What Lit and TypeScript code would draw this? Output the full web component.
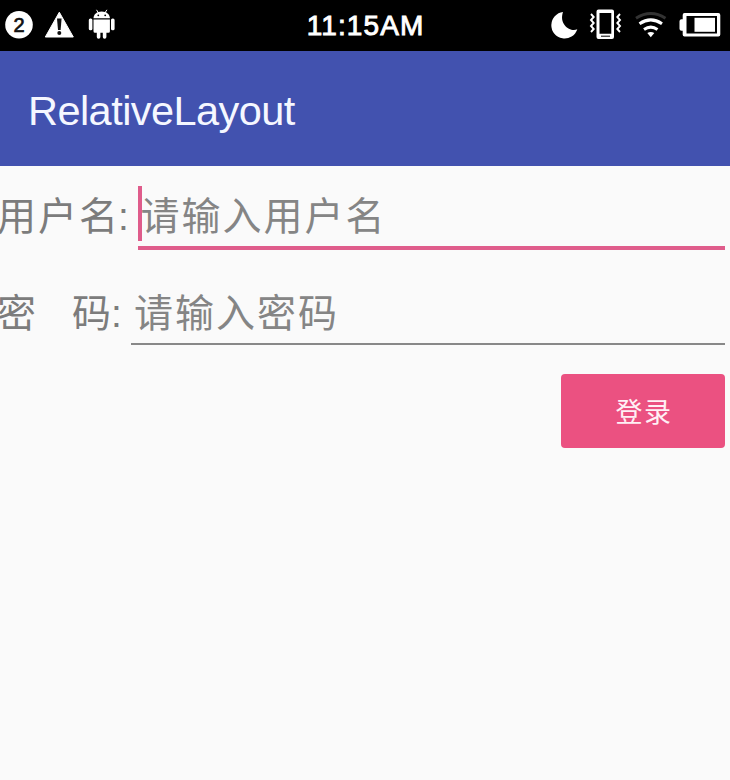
import { LitElement, html, css } from "lit";
import { customElement } from "lit/decorators.js";

@customElement("status-bar")
class StatusBar extends LitElement {
  static styles = css`
    :host {
      display: grid;
      grid-template-columns: 1fr auto 1fr;
      align-items: center;
      height: 51px;
      background: #000;
      color: #fff;
      font-family: "Liberation Sans", sans-serif;
    }
    svg { display: block; }
    .system { justify-self: end; }
    .clock {
      font-size: 28px;
      line-height: 52px;
      height: 51px;
      letter-spacing: 1.1px;
      padding-left: 1px;
      -webkit-text-stroke: 0.9px #fff;
    }
  `;
  render() {
    return html`
      <svg width="130" height="51" viewBox="0 0 130 51">
        <circle cx="19" cy="24.7" r="13.8" fill="#fff" />
        <text x="19" y="32" text-anchor="middle" font-size="20" fill="#111" stroke="#111" stroke-width=".7">2</text>
        <path d="M59.3 12.2 73.3 37H45.3Z" fill="#fff" stroke="#fff" stroke-width="1" stroke-linejoin="round" />
        <path d="M57 18.500h4.600l-1 11.500h-2.600z" fill="#111" />
        <circle cx="59.3" cy="33" r="2" fill="#111" />
        <g fill="#fff">
          <path d="M93.5 18.2c.2-3.8 3.3-6.6 8.2-6.6s8 2.8 8.2 6.6z" />
          <path d="M96.5 9.8l2.2 3.5M106.9 9.8l-2.2 3.5" stroke="#fff" stroke-width="1" />
          <path d="M93.5 19.6h16.4v11.6a1.5 1.5 0 0 1-1.5 1.5h-2v4.3a1.8 1.8 0 0 1-3.6 0v-4.3h-2.4v4.3a1.8 1.8 0 0 1-3.6 0v-4.3h-1.8a1.5 1.5 0 0 1-1.5-1.5z" />
          <rect x="88.8" y="18.5" width="3.6" height="11.8" rx="1.6" />
          <rect x="111" y="18.5" width="3.6" height="11.8" rx="1.6" />
        </g>
        <circle cx="98.3" cy="15.3" r=".9" /><circle cx="105.2" cy="15.3" r=".9" />
      </svg>
      <div class="clock">11:15AM</div>
      <svg class="system" width="190" height="51" viewBox="540 0 190 51">
        <path d="M563 12A13.300 13.300 0 1 0 577.300 29.200C571 32.500 558.500 25 563 12Z" fill="#fff" />
        <path fill-rule="evenodd" fill="#fff" d="M598.5 9.500h13.500a2 2 0 0 1 2 2v25.500a2 2 0 0 1-2 2h-13.500a2 2 0 0 1-2-2v-25.500a2 2 0 0 1 2-2zM599.500 13v20.800h11.800v-20.800z" />
        <path d="M601 36.200h9" stroke="#000" stroke-width="1" />
        <path d="M591 14l2.700 3-2.700 3 2.700 3-2.700 3 2.700 3-2.700 3M620 14l-2.700 3 2.700 3-2.700 3 2.700 3-2.700 3 2.700 3" fill="none" stroke="#fff" stroke-width="1.9" />
        <g fill="none" stroke-width="3">
          <path d="M636 18.200Q650.800 8.800 665.500 18.200" stroke="#333" />
          <path d="M639.500 23.800Q650.800 16 662 23.800" stroke="#fff" />
          <path d="M644 29.500Q650.800 24.800 657.500 29.500" stroke="#fff" />
        </g>
        <path d="M647.300 33q3.500-1.800 7 0l-3.500 4.300z" fill="#fff" />
        <path fill-rule="evenodd" fill="#fff" d="M684.500 13h33.800a2 2 0 0 1 2 2v19.500a2 2 0 0 1-2 2h-33.800a1.800 1.800 0 0 1-1.800-1.800v-4h-1.200a2 2 0 0 1-2-2v-7.500a2 2 0 0 1 2-2h1.200v-4.200a2 2 0 0 1 1.800-2zM686.500 16v17.500h30.500v-17.500z" />
        <rect x="694.500" y="17.800" width="20.500" height="14" fill="#fff" />
      </svg>
    `;
  }
}

@customElement("app-root")
class AppRoot extends LitElement {
  static styles = css`
    :host {
      display: block;
      height: 780px;
      overflow: hidden;
      background: #fafafa;
      color: #7c7c7c;
      font-family: "Liberation Sans", "Noto Sans CJK SC", sans-serif;
    }
    .toolbar {
      height: 115px;
      box-sizing: border-box;
      padding-left: 28px;
      background: #4252af;
      color: #f5f7ff;
      font-size: 41.5px;
      line-height: 120px;
      letter-spacing: -0.55px;
      white-space: nowrap;
    }
    .row {
      display: flex;
      box-sizing: border-box;
      padding-right: 5px;
      font-size: 39px;
      letter-spacing: 2px;
      font-weight: 400;
      white-space: pre;
    }
    .user { margin-top: 20px; height: 64px; line-height: 62px; }
    .pass { margin-top: 37px; height: 58px; line-height: 54px; }
    .label { flex: none; margin-left: -3px; display: flex; }
    .user .label { width: 140.5px; }
    .pass .label { width: 134px; }
    .colon { margin-left: -2px; }
    .second { margin-left: 34px; }
    .field { flex: 1; color: #858585; }
    .user .field { border-bottom: 4px solid #df5c8b; display: flex; }
    .pass .field { border-bottom: 2px solid #888; padding-left: 3px; }
    .caret { width: 4px; height: 55px; background: #df5c8b; margin-right: -1px; }
    .actions { display: flex; justify-content: flex-end; padding: 29px 5px 0 0; }
    .login {
      width: 164px;
      height: 74px;
      padding: 0 0 0 2px;
      border: 0;
      border-radius: 4px;
      background: #eb5181;
      color: #fff0f5;
      font: 27px/74px "Noto Sans CJK SC", sans-serif;
      letter-spacing: 1.5px;
    }
  `;
  render() {
    return html`
      <status-bar></status-bar>
      <div class="toolbar">RelativeLayout</div>
      <div class="row user">
        <div class="label"><span>用户名</span><span class="colon">:</span></div>
        <div class="field"><span class="caret"></span><span>请输入用户名</span></div>
      </div>
      <div class="row pass">
        <div class="label"><span>密</span><span class="second">码</span><span class="colon">:</span></div>
        <div class="field">请输入密码</div>
      </div>
      <div class="actions"><button class="login">登录</button></div>
    `;
  }
}
